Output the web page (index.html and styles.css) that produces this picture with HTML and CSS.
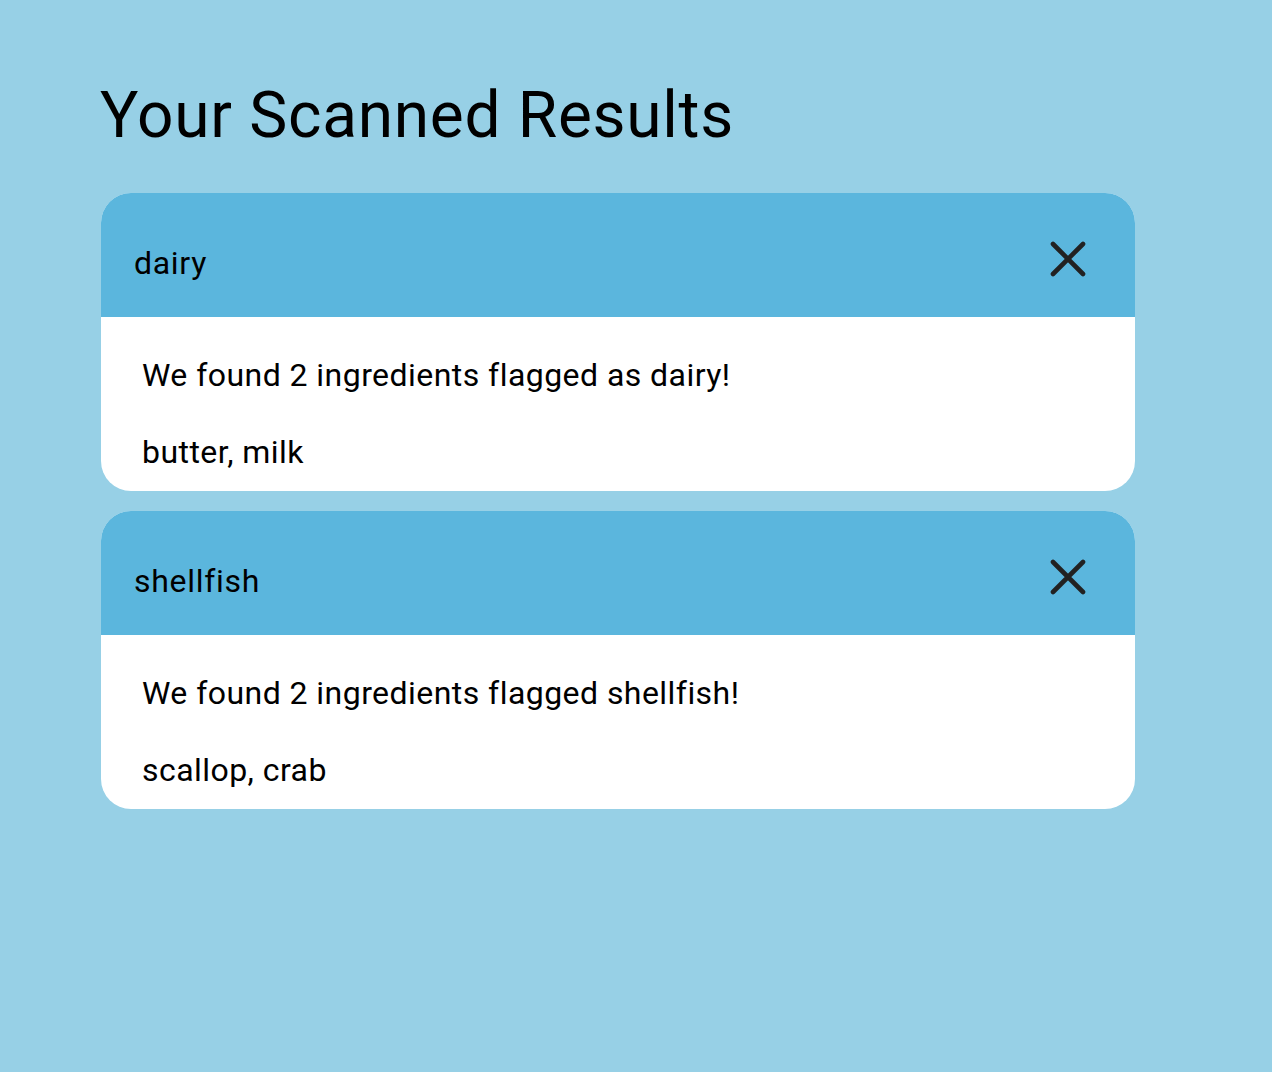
FILE: index.html
```html
<!DOCTYPE html>
<html>
<head>
<meta charset="utf-8">
<link rel="stylesheet" href="styles.css">
</head>
<body>
<main class="page">
  <h1 class="title">Your Scanned Results</h1>
  <section class="card">
    <div class="card-head">
      <span class="card-name">dairy</span>
      <svg class="close" width="36" height="36" viewBox="0 0 36 36"><path d="M3 3 L33 33 M33 3 L3 33" stroke="#222" stroke-width="4.6" stroke-linecap="round" fill="none"/></svg>
    </div>
    <div class="card-body">
      <p class="line">We found 2 ingredients flagged as dairy!</p>
      <p class="line">butter, milk</p>
    </div>
  </section>
  <section class="card">
    <div class="card-head">
      <span class="card-name">shellfish</span>
      <svg class="close" width="36" height="36" viewBox="0 0 36 36"><path d="M3 3 L33 33 M33 3 L3 33" stroke="#222" stroke-width="4.6" stroke-linecap="round" fill="none"/></svg>
    </div>
    <div class="card-body">
      <p class="line">We found 2 ingredients flagged shellfish!</p>
      <p class="line">scallop, crab</p>
    </div>
  </section>
</main>
</body>
</html>
```
FILE: styles.css
```css
html, body {
  margin: 0;
  padding: 0;
  background: #97d0e6;
}
body {
  font-family: Roboto, "Liberation Sans", sans-serif;
  color: #000;
  min-height: 1072px;
}
.page {
  display: flex;
  flex-direction: column;
  gap: 20px;
  padding: 81px 0 0 101px;
  width: 1034px;
}
.title {
  font-size: 64px;
  font-weight: 400;
  letter-spacing: 0.7px;
  margin: 0 0 22px -1px;
  line-height: 70px;
}
.card {
  border-radius: 30px;
  overflow: hidden;
  background: #fff;
}
.card-head {
  background: #5bb6dd;
  height: 124px;
  display: flex;
  align-items: flex-start;
  justify-content: space-between;
  padding: 0 49px 0 33px;
}
.card-name {
  font-size: 32px;
  letter-spacing: 0.7px;
  line-height: 38px;
  margin-top: 51px;
}
.close {
  width: 36px;
  height: 36px;
  margin-top: 48px;
}
.card-body {
  padding: 39px 41px 0;
  height: 174px;
  box-sizing: border-box;
}
.line {
  font-size: 32px;
  letter-spacing: 0.45px;
  margin: 0 0 39px;
  line-height: 38px;
}
```
